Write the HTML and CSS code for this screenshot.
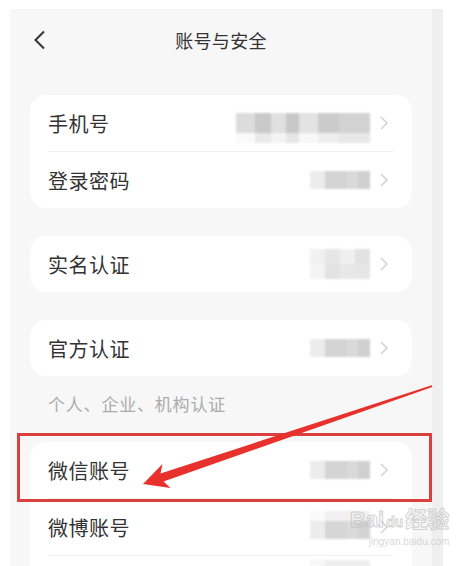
FILE: index.html
```html
<!DOCTYPE html>
<html lang="zh">
<head>
<meta charset="utf-8">
<link rel="stylesheet" href="styles.css">
</head>
<body>
<div class="page">
  <div class="screen">
    <header class="bar">
      <svg class="back" width="14" height="20" viewBox="0 0 14 20"><polyline points="11,1.5 2.5,10 11,18.5" fill="none" stroke="#333" stroke-width="2"/></svg>
      <h1 class="title">账号与安全</h1>
      <span></span>
    </header>

    <div class="content">
      <section class="card">
        <div class="row"><span class="label">手机号</span><span class="val v-phone"></span><svg class="chev" width="8" height="14" viewBox="0 0 8 14"><polyline points="1,1 7,7 1,13" fill="none" stroke="#cfcfcf" stroke-width="1.4"/></svg></div>
        <div class="sep"></div>
        <div class="row"><span class="label">登录密码</span><span class="val v-a"></span><svg class="chev" width="8" height="14" viewBox="0 0 8 14"><polyline points="1,1 7,7 1,13" fill="none" stroke="#cfcfcf" stroke-width="1.4"/></svg></div>
      </section>

      <section class="card">
        <div class="row"><span class="label">实名认证</span><span class="val v-b"></span><svg class="chev" width="8" height="14" viewBox="0 0 8 14"><polyline points="1,1 7,7 1,13" fill="none" stroke="#cfcfcf" stroke-width="1.4"/></svg></div>
      </section>

      <section class="card card-tight">
        <div class="row"><span class="label">官方认证</span><span class="val v-a"></span><svg class="chev" width="8" height="14" viewBox="0 0 8 14"><polyline points="1,1 7,7 1,13" fill="none" stroke="#cfcfcf" stroke-width="1.4"/></svg></div>
      </section>
      <p class="caption">个人、企业、机构认证</p>

      <section class="card card-tight">
        <div class="row"><span class="label">微信账号</span><span class="val v-a"></span><svg class="chev" width="8" height="14" viewBox="0 0 8 14"><polyline points="1,1 7,7 1,13" fill="none" stroke="#cfcfcf" stroke-width="1.4"/></svg></div>
        <div class="sep"></div>
        <div class="row"><span class="label">微博账号</span><span class="val v-c"></span><svg class="chev" width="8" height="14" viewBox="0 0 8 14"><polyline points="1,1 7,7 1,13" fill="none" stroke="#cfcfcf" stroke-width="1.4"/></svg></div>
        <div class="sep"></div>
        <div class="row-tail"><span class="val v-d"></span></div>
      </section>
    </div>
  </div>
  <div class="strip"></div>

  <div class="mark-box"></div>
  <svg class="arrow" width="468" height="566" viewBox="0 0 468 566">
    <polygon points="143,484 170.5,488 163.5,481.6 432.3,387 431.7,385.2 160.5,473.6 162.5,464" fill="#e8312c"/>
  </svg>
  <div class="watermark">
    <span class="wm-logo">Bai<span class="wm-du">du</span>经验</span>
    <span class="wm-url">jingyan.baidu.com</span>
  </div>
</div>
</body>
</html>
```

FILE: styles.css
```css
* { box-sizing: border-box; }
html, body { margin: 0; padding: 0; background: #fff; }
body {
  font-family: "Noto Sans CJK SC", "Noto Sans", sans-serif;
  color: #333;
  width: 468px;
  height: 566px;
  overflow: hidden;
}
.page {
  position: relative;
  display: flex;
  align-items: flex-start;
  padding: 9px 0 0 10px;
  height: 566px;
  overflow: hidden;
}
.screen {
  width: 422px;
  height: 557px;
  background: #f7f7f7;
  overflow: hidden;
}
.strip {
  width: 11px;
  height: 557px;
  background: #efefef;
}
.bar {
  display: grid;
  grid-template-columns: 60px 1fr 60px;
  align-items: center;
  height: 62px;
  padding-left: 23px;
  padding-right: 23px;
}
.back { display: block; }
.title {
  margin: 0;
  text-align: center;
  font-size: 18px;
  font-weight: 400;
  color: #333;
  letter-spacing: 0.3px;
}
.content {
  padding: 24px 20px 0 20px;
  display: flex;
  flex-direction: column;
}
.card {
  background: #fff;
  border-radius: 16px;
  margin-bottom: 28px;
}
.card-tight { margin-bottom: 0; }
.row {
  display: flex;
  align-items: center;
  height: 56px;
  padding: 0 24px 0 18px;
}
.row-tail {
  display: flex;
  justify-content: flex-end;
  height: 30px;
  padding: 4px 42px 0 18px;
}
.label {
  flex: 1;
  font-size: 20px;
  letter-spacing: 0.5px;
  color: #333;
}
.sep {
  height: 1px;
  background: #efefef;
  margin: 0 19px 0 18px;
}
.chev { display: block; margin-left: 10px; }
.val { display: block; filter: blur(0.8px); }
.v-phone {
  width: 134px;
  height: 30px;
  margin-top: 10px;
  background:
    linear-gradient(90deg, #dcdcdc 0 14%, #c9c9c9 14% 26%, #e0e0e0 26% 37%, #c8c8c8 37% 47%, #e3e3e3 47% 61%, #cbcbcb 61% 77%, #d2d2d2 77% 100%) top / 100% 20px no-repeat,
    linear-gradient(90deg, #fafafa 0 14%, #e9e9e9 14% 26%, #f4f4f4 26% 37%, #e6e6e6 37% 47%, #f8f8f8 47% 61%, #eeeeee 61% 77%, #e8e8e8 77% 100%) bottom / 100% 10px no-repeat;
}
.v-a {
  width: 60px;
  height: 18px;
  background: linear-gradient(90deg, #ececec 0 25%, #d4d4d4 25% 62%, #d9d9d9 62% 80%, #cfcfcf 80% 100%);
}
.v-b {
  width: 60px;
  height: 30px;
  background:
    linear-gradient(90deg, #f1f1f1 0 25%, #e6e6e6 25% 50%, #f0f0f0 50% 75%, #e2e2e2 75% 100%) top / 100% 15px no-repeat,
    linear-gradient(90deg, #f4f4f4 0 25%, #e3e3e3 25% 50%, #e8e8e8 50% 75%, #e6e6e6 75% 100%) bottom / 100% 15px no-repeat;
}
.v-c {
  width: 60px;
  height: 28px;
  margin-top: -4px;
  background:
    linear-gradient(90deg, #fafafa 0 25%, #f0f0f0 25% 100%) top / 100% 10px no-repeat,
    linear-gradient(90deg, #ececec 0 25%, #d6d6d6 25% 62%, #dadada 62% 80%, #d3d3d3 80% 100%) bottom / 100% 18px no-repeat;
}
.v-d {
  width: 60px;
  height: 14px;
  background: linear-gradient(90deg, #f7f7f7 0 25%, #eeeeee 25% 100%);
}
.caption {
  margin: 0;
  padding: 16px 0 26px 18px;
  font-size: 17px;
  line-height: 24px;
  letter-spacing: 0.8px;
  color: #ababab;
}
.mark-box {
  position: absolute;
  left: 17px;
  top: 433px;
  width: 415px;
  height: 69px;
  border: 3px solid #d9403f;
}
.arrow {
  position: absolute;
  left: 0;
  top: 0;
}
.watermark {
  position: absolute;
  left: 350px;
  top: 507px;
  display: flex;
  flex-direction: column;
  align-items: flex-end;
  color: rgba(190, 190, 190, 0.55);
  font-family: "Liberation Sans", "Noto Sans CJK SC", sans-serif;
}
.wm-logo {
  font-size: 22px;
  line-height: 26px;
  font-weight: 700;
  color: transparent;
  -webkit-text-stroke: 1px rgba(190, 190, 190, 0.7);
}
.wm-du {
  font-size: 14px;
  margin: 0 2px;
}
.wm-url {
  font-size: 10px;
  line-height: 14px;
  color: rgba(190, 190, 190, 0.6);
}
```
